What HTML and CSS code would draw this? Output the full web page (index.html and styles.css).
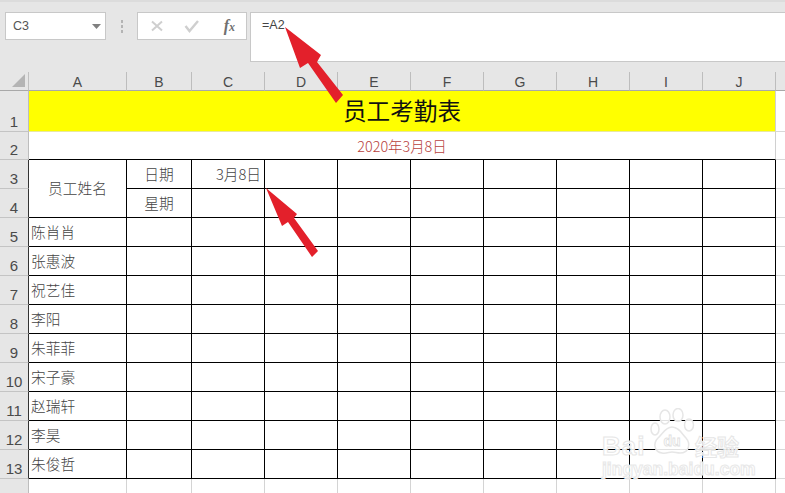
FILE: index.html
```html
<!DOCTYPE html>
<html lang="zh-CN">
<head>
<meta charset="utf-8">
<title>员工考勤表</title>
<link rel="stylesheet" href="styles.css">
</head>
<body>
<div class="app">
  <header class="formula-bar">
    <div class="name-box"><span>C3</span><svg class="caret" width="9" height="5" viewBox="0 0 9 5"><path d="M0 0h9L4.500 5z" fill="#808080"/></svg></div>
    <div class="grip"><i></i><i></i><i></i></div>
    <div class="fn-box">
      <svg width="14" height="14" viewBox="0 0 14 14"><path d="M2 2.500l10 9M12 2.500l-10 9" stroke="#cfcfcf" stroke-width="2" fill="none"/></svg>
      <svg width="16" height="14" viewBox="0 0 16 14"><path d="M1.500 7l4 5 8.500-10" stroke="#cfcfcf" stroke-width="2.400" fill="none"/></svg>
      <span class="fx">f<span class="fx-x">x</span></span>
    </div>
    <div class="input">=A2</div>
  </header>

  <main class="sheet">
    <div class="corner"><svg width="13" height="13" viewBox="0 0 13 13"><path d="M13 0v13H0z" fill="#b4b4b4"/></svg></div>
    <div class="ch">A</div><div class="ch">B</div><div class="ch">C</div><div class="ch">D</div><div class="ch">E</div><div class="ch">F</div><div class="ch">G</div><div class="ch">H</div><div class="ch">I</div><div class="ch">J</div><div class="ch end"></div>

    <div class="rh">1</div><div class="title">员工考勤表</div><div class="fill"></div>
    <div class="rh">2</div><div class="subtitle">2020年3月8日</div><div class="fill"></div>

    <div class="rh dark">3</div><div class="c tall">员工姓名</div><div class="c mid">日期</div><div class="c right">3月8日</div><div class="c"></div><div class="c"></div><div class="c"></div><div class="c"></div><div class="c"></div><div class="c"></div><div class="c"></div><div class="fill"></div>
    <div class="rh dark">4</div><div class="c mid">星期</div><div class="c"></div><div class="c"></div><div class="c"></div><div class="c"></div><div class="c"></div><div class="c"></div><div class="c"></div><div class="c"></div><div class="fill"></div>

    <div class="rh dark">5</div><div class="c name">陈肖肖</div><div class="c"></div><div class="c"></div><div class="c"></div><div class="c"></div><div class="c"></div><div class="c"></div><div class="c"></div><div class="c"></div><div class="c"></div><div class="fill"></div>
    <div class="rh dark">6</div><div class="c name">张惠波</div><div class="c"></div><div class="c"></div><div class="c"></div><div class="c"></div><div class="c"></div><div class="c"></div><div class="c"></div><div class="c"></div><div class="c"></div><div class="fill"></div>
    <div class="rh dark">7</div><div class="c name">祝艺佳</div><div class="c"></div><div class="c"></div><div class="c"></div><div class="c"></div><div class="c"></div><div class="c"></div><div class="c"></div><div class="c"></div><div class="c"></div><div class="fill"></div>
    <div class="rh dark">8</div><div class="c name">李阳</div><div class="c"></div><div class="c"></div><div class="c"></div><div class="c"></div><div class="c"></div><div class="c"></div><div class="c"></div><div class="c"></div><div class="c"></div><div class="fill"></div>
    <div class="rh dark">9</div><div class="c name">朱菲菲</div><div class="c"></div><div class="c"></div><div class="c"></div><div class="c"></div><div class="c"></div><div class="c"></div><div class="c"></div><div class="c"></div><div class="c"></div><div class="fill"></div>
    <div class="rh dark">10</div><div class="c name">宋子豪</div><div class="c"></div><div class="c"></div><div class="c"></div><div class="c"></div><div class="c"></div><div class="c"></div><div class="c"></div><div class="c"></div><div class="c"></div><div class="fill"></div>
    <div class="rh dark">11</div><div class="c name">赵瑞轩</div><div class="c"></div><div class="c"></div><div class="c"></div><div class="c"></div><div class="c"></div><div class="c"></div><div class="c"></div><div class="c"></div><div class="c"></div><div class="fill"></div>
    <div class="rh dark">12</div><div class="c name">李昊</div><div class="c"></div><div class="c"></div><div class="c"></div><div class="c"></div><div class="c"></div><div class="c"></div><div class="c"></div><div class="c"></div><div class="c"></div><div class="fill"></div>
    <div class="rh dark">13</div><div class="c name">朱俊哲</div><div class="c"></div><div class="c"></div><div class="c"></div><div class="c"></div><div class="c"></div><div class="c"></div><div class="c"></div><div class="c"></div><div class="c"></div><div class="fill"></div>

    <div class="rh">14</div><div class="e"></div><div class="e"></div><div class="e"></div><div class="e"></div><div class="e"></div><div class="e"></div><div class="e"></div><div class="e"></div><div class="e"></div><div class="e"></div><div class="fill"></div>
  </main>

  <svg class="arrows" width="785" height="493" viewBox="0 0 785 493">
    <path d="M285 27L321 55 317 62 343 95 336 103 308 63 300 68z" fill="#e3202b"/>
    <path d="M266 188L297 214 294 218 318 251 312 257 288 222 282 226z" fill="#e3202b"/>
  </svg>

  <div class="watermark">
    <div class="wm-top">
      <span class="wm-word">Bai</span>
      <svg class="paw" width="46" height="50" viewBox="0 0 46 50">
        <g fill="#fff" fill-opacity=".88" stroke="#e6e6e6" stroke-width="1.500">
          <ellipse cx="6" cy="21" rx="4" ry="6"/>
          <ellipse cx="16" cy="9" rx="5" ry="7"/>
          <ellipse cx="29" cy="7" rx="5" ry="6.500"/>
          <ellipse cx="40" cy="17" rx="4.500" ry="6"/>
          <path d="M23 19c7 0 10 7 14 11 5 6 3 15-6 15-3 0-5-1-8-1s-6 2-10 1c-8-1-9-10-4-15 5-4 7-11 14-11z"/>
        </g>
        <text x="23" y="38" text-anchor="middle" class="wm-du">du</text>
      </svg>
      <span class="wm-cn">经验</span>
    </div>
    <div class="wm-url">jingyan.baidu.com</div>
  </div>
</div>
</body>
</html>
```
FILE: styles.css
```css
* { box-sizing: border-box; }
html, body { margin: 0; padding: 0; }
body { background: #fff; font-family: "Noto Sans CJK SC", "Noto Sans", sans-serif; overflow: hidden; }
.app { position: relative; width: 785px; height: 493px; overflow: hidden; }

.formula-bar {
  height: 72px;
  background: #e6e6e6;
  border-top: 2px solid #dcdcdc;
  padding: 10px 0 0 5px;
  display: flex;
  align-items: flex-start;
  position: relative;
}
.name-box {
  width: 101px; height: 28px;
  background: #fff;
  border: 1px solid #c8c8c8;
  display: flex; align-items: center; justify-content: space-between;
  padding: 0 2px 0 7px;
  font: 12.500px "Liberation Sans", sans-serif;
  color: #555;
}
.caret { margin-right: 2px; }
.grip { width: 31px; height: 28px; display: flex; flex-direction: column; align-items: center; justify-content: center; gap: 2px; }
.grip i { width: 2px; height: 3px; background: #b4b4b4; }
.fn-box {
  width: 110px; height: 28px;
  background: #fff;
  border: 1px solid #c8c8c8;
  display: flex; align-items: center; justify-content: space-between;
  padding: 0 11px 0 12px;
}
.fn-box svg:nth-child(2) { margin-left: -3px; }
.fx { font: italic bold 16px/16px "Liberation Serif", serif; color: #707070; white-space: nowrap; }
.fx-x { font-size: 12px; }
.input {
  flex: 1; height: 50px;
  margin-left: 3px;
  background: #fff;
  border: 1px solid #c8c8c8;
  border-right: 0;
  padding: 5px 0 0 11px;
  font: 12.500px "Liberation Sans", sans-serif;
  color: #444;
}

.sheet {
  display: grid;
  grid-template-columns: 29px 98px 65px repeat(8, 73px) 9px;
  grid-template-rows: 19px 41px 28px repeat(12, 29px) 15px;
  height: 421px;
  background: #fff;
}
.corner { background: #e6e6e6; border-right: 1px solid #c0c0c0; border-bottom: 1px solid #a8a8a8; display: flex; align-items: flex-end; justify-content: flex-end; padding: 0 3px 3px 0; }
.ch {
  background: #e6e6e6;
  border-right: 1px solid #bdbdbd;
  border-bottom: 1px solid #a8a8a8;
  font: 14px/18px "Liberation Sans", sans-serif;
  color: #4a4a4a;
  text-align: center;
  padding-top: 1px;
}
.ch.end { border-right: 0; }
.rh {
  background: #e6e6e6;
  border-right: 1px solid #bdbdbd;
  border-bottom: 1px solid #c4c4c4;
  font: 15px/18px "Liberation Sans", sans-serif;
  color: #4a4a4a;
  display: flex; align-items: flex-end; justify-content: center;
}
.rh.dark { border-right-color: #333; }
.title {
  grid-column: span 10;
  background: #ff0;
  border-right: 1px solid #d0d0d0;
  border-bottom: 1px solid #e8e8a0;
  font-size: 23.600px; font-weight: 400;
  color: #111;
  padding-bottom: 2px;
  display: flex; align-items: center; justify-content: center;
}
.subtitle {
  grid-column: span 10;
  border-right: 1px solid #d0d0d0;
  border-bottom: 1px solid #000;
  font-size: 14.400px;
  font-weight: 300;
  color: #b8413d;
  padding-bottom: 1px;
  display: flex; align-items: center; justify-content: center;
}
.fill { border-bottom: 1px solid #d8d8d8; }
.c {
  border-right: 1px solid #000;
  border-bottom: 1px solid #000;
  font-size: 14.700px;
  font-weight: 300;
  color: #444;
  padding-bottom: 2px;
  display: flex; align-items: center;
}
.tall { grid-row: span 2; justify-content: center; }
.mid { justify-content: center; }
.right { justify-content: flex-end; padding-right: 3px; }
.name { padding-left: 2px; }
.e { border-right: 1px solid #d4d4d4; }

.arrows { position: absolute; left: 0; top: 0; pointer-events: none; }

.watermark { position: absolute; left: 602px; top: 408px; width: 142px; }
.wm-top { display: flex; align-items: flex-end; height: 50px; }
.wm-word { font: bold 26px/24px "Liberation Sans", sans-serif; color: rgba(255,255,255,.9); -webkit-text-stroke: 1px #e6e6e6; letter-spacing: 1px; width: 47px; }
.paw { flex: none; margin-right: 0; }
.wm-du { font: bold 14px "Liberation Sans", sans-serif; fill: #fff; stroke: #e0e0e0; stroke-width: .8px; }
.wm-cn { font-size: 22px; line-height: 26px; font-weight: 700; color: rgba(255,255,255,.9); -webkit-text-stroke: 1px #e6e6e6; white-space: nowrap; }
.wm-url { font: bold 17.500px/20px "Liberation Sans", sans-serif; color: rgba(255,255,255,.9); -webkit-text-stroke: 1px #e8e8e8; margin-top: 1px; white-space: nowrap; }
```
